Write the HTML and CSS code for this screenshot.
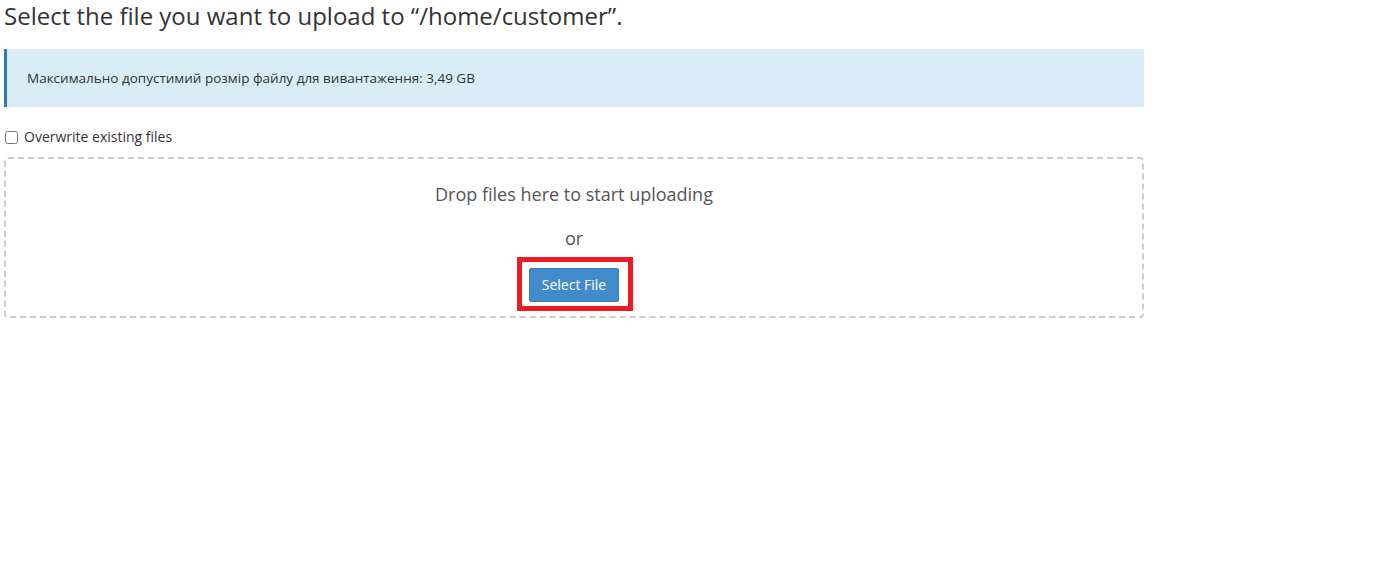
FILE: index.html
```html
<!DOCTYPE html>
<html lang="en">
<head>
  <meta charset="UTF-8">
  <meta name="viewport" content="width=device-width, initial-scale=1.0">
  <title>Upload Files</title>

  <link rel="stylesheet" href="styles.css">
</head>
<body>
  <div class="page">
    <h1 class="page-title">Select the file you want to upload to “/home/customer”.</h1>

    <div class="alert alert-info">
      Максимально допустимий розмір файлу для вивантаження: 3,49 GB
    </div>

    <label class="checkbox-row">
      <input type="checkbox" class="checkbox">
      <span>Overwrite existing files</span>
    </label>

    <div class="dropzone">
      <p class="drop-text">Drop files here to start uploading</p>
      <p class="drop-or">or</p>
      <span class="highlight">
        <button type="button" class="btn btn-primary">Select File</button>
      </span>
    </div>
  </div>
</body>
</html>
```

FILE: styles.css
```css
* {
  box-sizing: border-box;
}

body {
  margin: 0;
  font-family: 'Open Sans', 'Noto Sans', 'Liberation Sans', sans-serif;
  font-size: 14px;
  line-height: 20px;
  color: #333;
  background: #fff;
}

.page {
  width: 1144px;
  padding: 3px 0 0 4px;
}

.page-title {
  margin: 0 0 20px;
  font-size: 24px;
  line-height: 26px;
  font-weight: 400;
  color: #333;
}

.alert {
  padding: 19px 20px 19px 20px;
  font-size: 13.5px;
  line-height: 20px;
}

.alert-info {
  background-color: #d9edf7;
  border-left: 3px solid #337ab7;
  color: #333;
}

.checkbox-row {
  display: flex;
  align-items: center;
  margin-top: 20px;
  height: 20px;
  font-size: 14px;
  cursor: pointer;
}

.checkbox {
  width: 13px;
  height: 13px;
  margin: 1px 6px 0 1px;
}

.dropzone {
  margin-top: 10px;
  border: 2px dashed #ccc;
  border-radius: 4px;
  padding: 22px 0 14px;
  text-align: center;
  color: #555;
}

.drop-text {
  margin: 0;
  font-size: 18px;
  line-height: 26px;
}

.drop-or {
  margin: 18px 0 17px;
  font-size: 18px;
  line-height: 26px;
}

.highlight {
  position: relative;
  display: inline-block;
  vertical-align: top;
}

/* red annotation frame drawn over the button */
.highlight:after {
  content: '';
  position: absolute;
  left: -12px;
  right: -14px;
  top: -11px;
  bottom: -9px;
  border: 5px solid #ed1c24;
  pointer-events: none;
}

.btn {
  display: block;
  padding: 6px 12px;
  font-family: inherit;
  font-size: 14px;
  line-height: 20px;
  border-radius: 2px;
  cursor: pointer;
}

.btn-primary {
  color: #fff;
  background-color: #428bca;
  border: 1px solid #357ebd;
}
```
